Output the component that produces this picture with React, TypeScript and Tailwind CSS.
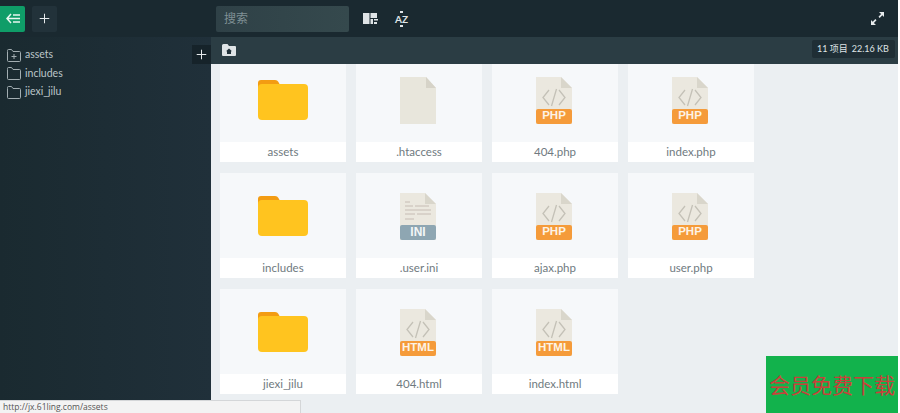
import { Plus } from "lucide-react";

const font = "font-['Lato','Noto_Sans_CJK_SC',sans-serif]";

function TreeFolder({ plus }: { plus?: boolean }) {
  return (
    <svg width="14" height="13" viewBox="0 0 14 13" fill="none" stroke="#a3aeb2" strokeWidth="1">
      <path d="M0.500 2.500V1.500a1 1 0 0 1 1-1h3l1.500 2h6.500a1 1 0 0 1 1 1v8a1 1 0 0 1-1 1h-11a1 1 0 0 1-1-1z" />
      {plus && <path d="M7 5v5M4.500 7.500h5" />}
    </svg>
  );
}

function FolderIcon() {
  return (
    <svg width="50" height="40" viewBox="0 0 50 40">
      <path d="M3 0h14c2 0 3 1 4 3l1 2v6H0V3c0-2 1-3 3-3z" fill="#f39c12" />
      <rect x="0" y="4" width="50" height="36" rx="4" fill="#ffc41f" />
    </svg>
  );
}

function PlainFile() {
  return (
    <svg className="mr-[2px]" width="36" height="47" viewBox="0 0 36 47">
      <path d="M0 0h26l10 11v36H0z" fill="#e8e6dc" />
      <path d="M26 0l10 11H26z" fill="#d6d3c8" />
    </svg>
  );
}

function CodeFile({ label }: { label: string }) {
  return (
    <div className="relative w-[36px] h-[47px] mr-[2px]">
      <svg width="36" height="47" viewBox="0 0 36 47" className="absolute left-0 top-0">
        <path d="M0 0h25l11 11v36H0z" fill="#ebe8df" />
        <path d="M25 0l11 11H25z" fill="#d9d6cb" />
        <path d="M13 13l-6 7.500 6 7.500M23 13l6 7.500-6 7.500M20.500 12l-5 17" fill="none" stroke="#c4c1b7" strokeWidth="1.300" />
      </svg>
      <div className="absolute left-0 right-0 bottom-0 h-[15px] bg-[#f59b3a] rounded-[2px] flex items-center justify-center text-[#fdf3e6] text-[11.500px] font-bold leading-none font-['Liberation_Sans',sans-serif]">
        {label}
      </div>
    </div>
  );
}

function IniFile() {
  return (
    <div className="relative w-[36px] h-[47px] mr-[2px]">
      <svg width="36" height="47" viewBox="0 0 36 47" className="absolute left-0 top-0">
        <path d="M0 0h25l11 11v36H0z" fill="#ebe8df" />
        <path d="M25 0l11 11H25z" fill="#d9d6cb" />
        <path d="M5 9h5M5 13h8M15 13h14M5 17h26M5 21h10M17 21h14M5 26h9" stroke="#c6bcb4" strokeWidth="1" />
      </svg>
      <div className="absolute left-0 right-0 bottom-0 h-[15px] bg-[#8ea6b2] rounded-[2px] flex items-center justify-center text-[#f2f6f7] text-[12px] font-bold leading-none font-['Liberation_Sans',sans-serif]">
        INI
      </div>
    </div>
  );
}

const files = [
  { name: "assets", icon: <FolderIcon /> },
  { name: ".htaccess", icon: <PlainFile /> },
  { name: "404.php", icon: <CodeFile label="PHP" /> },
  { name: "index.php", icon: <CodeFile label="PHP" /> },
  { name: "includes", icon: <FolderIcon /> },
  { name: ".user.ini", icon: <IniFile /> },
  { name: "ajax.php", icon: <CodeFile label="PHP" /> },
  { name: "user.php", icon: <CodeFile label="PHP" /> },
  { name: "jiexi_jilu", icon: <FolderIcon /> },
  { name: "404.html", icon: <CodeFile label="HTML" /> },
  { name: "index.html", icon: <CodeFile label="HTML" /> },
];

export default function App() {
  return (
    <div className="relative w-[900px] h-[413px] overflow-hidden bg-white">
      <div className={`w-[898px] h-full flex flex-col bg-[#ebeff2] ${font}`}>
        {/* Header */}
        <div className="h-[37px] shrink-0 flex items-center bg-[#1a2930]">
          <button className="w-[25px] h-[26px] bg-[#0f9d68] flex items-center justify-center rounded-r-[2px]">
            <svg width="14" height="11" viewBox="0 0 14 11" fill="none" stroke="#e8f6f0" strokeWidth="1.500">
              <path d="M5 1L1 5.500l4 4.500M2 5.500h12M7 2h7M7 9h7" />
            </svg>
          </button>
          <button className="ml-[7px] w-[25px] h-[26px] bg-[#22323a] rounded-[2px] flex items-center justify-center text-[#e6eaec]">
            <Plus size={15} strokeWidth={1.600} />
          </button>
          <div className="ml-[159px] w-[133px] h-[26px] bg-gradient-to-r from-[#2f4147] to-[#35494d] rounded-[2px] flex items-center px-2 text-[12px] text-[#7f9095]">
            搜索
          </div>
          <svg className="ml-[14px]" width="15" height="11" viewBox="0 0 15 11" fill="#dfe4e6">
            <path d="M0 0h6.500v11H0zM7.500 0h6.500v5H7.500zM7.500 6h2.500v5H7.500zM11 6h4v1.500h-4zM11 9h3v2h-3z" />
          </svg>
          <div className="relative ml-[17px] w-[13px] h-[16px] flex items-center justify-center text-[#dfe4e6] text-[10px] font-bold leading-none">
            <span>AZ</span>
            <span className="absolute left-[5px] top-0 w-[3px] h-[2px] bg-[#dfe4e6]" />
            <span className="absolute left-[5px] bottom-0 w-[3px] h-[2px] bg-[#dfe4e6]" />
          </div>
          <svg className="ml-auto mr-[14px]" width="13" height="13" viewBox="0 0 13 13" fill="#e6eaec">
            <path d="M8 0h5v5l-1.700-1.700-2.600 2.600-1.200-1.200 2.600-2.600zM5 13H0V8l1.700 1.700 2.600-2.600 1.200 1.200-2.600 2.600z" />
          </svg>
        </div>

        <div className="flex flex-1 min-h-0">
          {/* Sidebar */}
          <div className="w-[211px] shrink-0 relative bg-gradient-to-r from-[#1a2a30] to-[#20303a] pt-[9px] pl-[7px]">
            {[
              { name: "assets", plus: true },
              { name: "includes" },
              { name: "jiexi_jilu" },
            ].map((f) => (
              <div key={f.name} className="h-[18.500px] flex items-center gap-[4px] text-[10.500px] text-[#bcc6c9]">
                <TreeFolder plus={f.plus} />
                <span>{f.name}</span>
              </div>
            ))}
            <div className="absolute right-0 top-[8px] w-[19px] h-[19px] bg-[#16232a] flex items-center justify-center text-[#e6eaec]">
              <Plus size={15} strokeWidth={1.600} />
            </div>
          </div>

          <div className="flex-1 min-w-0 flex flex-col">
            {/* Toolbar */}
            <div className="h-[27px] shrink-0 bg-[#2b3d44] flex items-center pl-[11px] pr-[3px]">
              <svg className="mb-[2px]" width="14" height="12" viewBox="0 0 14 12">
                <path d="M1.500 0h4l1.500 2h6a1 1 0 0 1 1 1v8a1 1 0 0 1-1 1H1a1 1 0 0 1-1-1V1.500a1.500 1.500 0 0 1 1.500-1.500z" fill="#dfe4e6" />
                <path d="M7 4.500L4 7.200h1V10h4V7.200h1z" fill="#22323a" />
              </svg>
              <div className="ml-auto w-[83px] h-[18px] bg-[#1f2e35] rounded-[2px] pl-[5px] flex items-center gap-[4px] text-[9px] text-[#dfe4e6] whitespace-nowrap mb-[3px]">
                <span>11 项目</span>
                <span>22.16 KB</span>
              </div>
            </div>

            {/* File grid */}
            <div className="flex-1 min-h-0 overflow-hidden pl-[9px]">
              <div className="grid grid-cols-[repeat(4,126px)] gap-x-[10px] gap-y-[11px] mt-[-7px]">
                {files.map((f) => (
                  <div key={f.name} className="h-[105px] flex flex-col bg-[#f6f8fa]">
                    <div className="flex-1 flex items-center justify-center pt-[1px]">{f.icon}</div>
                    <div className="h-[20px] bg-white flex items-center justify-center text-[11.500px] text-[#6f7a80]">
                      {f.name}
                    </div>
                  </div>
                ))}
              </div>
            </div>
          </div>
        </div>
      </div>

      {/* Browser status bubble */}
      <div className="absolute left-0 bottom-0 w-[301px] h-[13px] bg-[#f3f3f3] border-t border-r border-[#d4d6d8] pl-[3px] flex items-center text-[8.500px] text-[#555] font-['Open_Sans',sans-serif]">
        http://jx.61ling.com/assets
      </div>

      {/* Ad block */}
      <div className="absolute left-[766px] top-[356px] w-[132px] h-[57px] bg-[#12b24c] flex items-center justify-center text-[#c8413a] text-[21px] whitespace-nowrap font-['Noto_Sans_CJK_SC',sans-serif]">
        会员免费下载
      </div>
    </div>
  );
}
